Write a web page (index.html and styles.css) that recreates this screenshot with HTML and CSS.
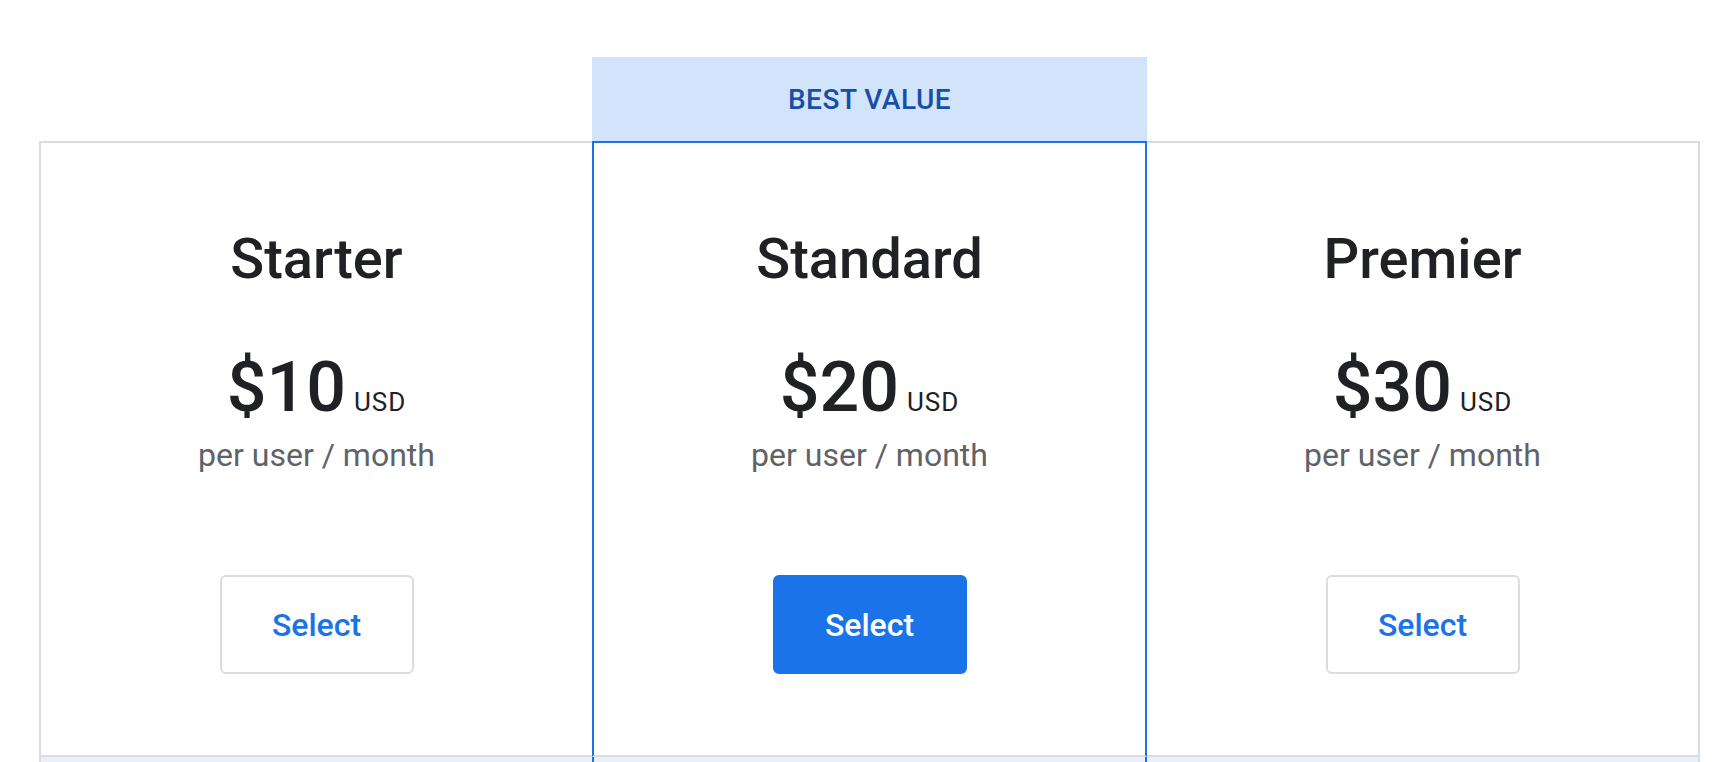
FILE: index.html
```html
<!DOCTYPE html>
<html lang="en">
<head>
<meta charset="utf-8">
<title>Plans</title>
<link rel="stylesheet" href="styles.css">
</head>
<body>
<div class="page">
  <div class="row badge-row">
    <div class="cell"></div>
    <div class="cell badge">BEST VALUE</div>
    <div class="cell"></div>
  </div>
  <div class="row plan-row">
    <div class="cell plan first">
      <h2 class="plan-name">Starter</h2>
      <div class="price"><span class="amount">$10</span><span class="currency">USD</span></div>
      <div class="period">per user / month</div>
      <button class="btn btn-outline">Select</button>
    </div>
    <div class="cell plan featured">
      <h2 class="plan-name">Standard</h2>
      <div class="price"><span class="amount">$20</span><span class="currency">USD</span></div>
      <div class="period">per user / month</div>
      <button class="btn btn-primary">Select</button>
    </div>
    <div class="cell plan last">
      <h2 class="plan-name">Premier</h2>
      <div class="price"><span class="amount">$30</span><span class="currency">USD</span></div>
      <div class="period">per user / month</div>
      <button class="btn btn-outline">Select</button>
    </div>
  </div>
  <div class="row feature-row">
    <div class="cell first"></div>
    <div class="cell featured"></div>
    <div class="cell last"></div>
  </div>
</div>
</body>
</html>
```
FILE: styles.css
```css
* { box-sizing: border-box; }
html, body { margin: 0; padding: 0; background: #ffffff; }
body {
  font-family: Roboto, "Noto Sans", "Liberation Sans", sans-serif;
  color: #202124;
  overflow: hidden;
}
.page {
  padding-top: 57px;
  padding-left: 39px;
}
.row {
  display: grid;
  grid-template-columns: 553px 555px 553px;
  width: 1661px;
}
.badge-row { height: 84px; }
.badge {
  background: #d2e3fc;
  color: #174ea6;
  font-size: 28px;
  font-weight: 500;
  letter-spacing: 0.5px;
  display: flex;
  align-items: center;
  justify-content: center;
}
.plan-row .cell {
  border-top: 2px solid #dadce0;
  border-bottom: 2px solid #dadce0;
  height: 616px;
}
.first { border-left: 2px solid #dadce0; }
.last { border-right: 2px solid #dadce0; }
.featured {
  border-left: 2px solid #1a73e8;
  border-right: 2px solid #1a73e8;
}
.plan-row .cell.featured { border-top-color: #1a73e8; }
.plan {
  display: flex;
  flex-direction: column;
  align-items: center;
  padding-top: 84px;
}
.plan-name {
  margin: 0;
  font-size: 56px;
  line-height: 64px;
  font-weight: 500;
  color: #202124;
}
.price {
  margin-top: 56px;
  height: 80px;
  display: flex;
  align-items: baseline;
  gap: 8px;
}
.amount {
  font-size: 70px;
  line-height: 80px;
  font-weight: 500;
  color: #202124;
}
.currency {
  font-size: 26px;
  line-height: 26px;
  font-weight: 400;
  letter-spacing: 1px;
  color: #202124;
}
.period {
  margin-top: 8px;
  font-size: 32px;
  line-height: 40px;
  color: #5f6368;
}
.btn {
  margin-top: 100px;
  width: 194px;
  height: 99px;
  border-radius: 6px;
  font-family: inherit;
  font-size: 32px;
  font-weight: 500;
  display: flex;
  align-items: center;
  justify-content: center;
  cursor: pointer;
}
.btn-outline {
  background: #ffffff;
  color: #1a73e8;
  border: 2px solid #dadce0;
}
.btn-primary {
  background: #1a73e8;
  color: #ffffff;
  border: 2px solid #1a73e8;
}
.feature-row { height: 40px; background: #e8f0fe; }
```
